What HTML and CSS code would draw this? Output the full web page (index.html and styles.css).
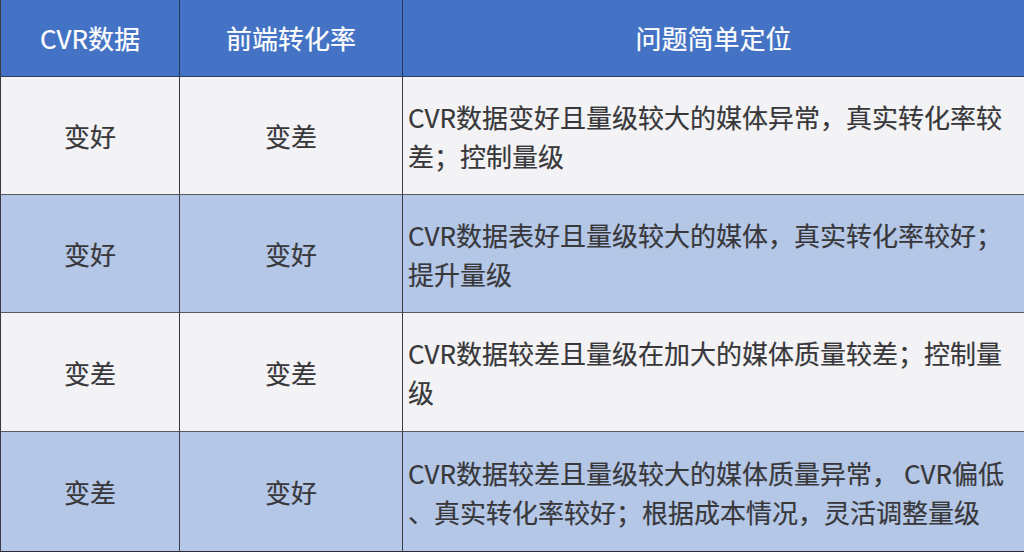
FILE: index.html
```html
<!DOCTYPE html>
<html lang="zh-CN">
<head>
<meta charset="utf-8">
<title>CVR数据</title>
<link rel="stylesheet" href="styles.css">
</head>
<body>
<div class="table">
  <div class="cell head c1">CVR数据</div>
  <div class="cell head c2">前端转化率</div>
  <div class="cell head c3">问题简单定位</div>

  <div class="cell light c1">变好</div>
  <div class="cell light c2">变差</div>
  <div class="cell light c3 desc"><p class="txt">CVR数据变好且量级较大的媒体异常，真实转化率较<br>差；控制量级</p></div>

  <div class="cell blue c1">变好</div>
  <div class="cell blue c2">变好</div>
  <div class="cell blue c3 desc"><p class="txt">CVR数据表好且量级较大的媒体，真实转化率较好；<br>提升量级</p></div>

  <div class="cell light c1">变差</div>
  <div class="cell light c2">变差</div>
  <div class="cell light c3 desc"><p class="txt">CVR数据较差且量级在加大的媒体质量较差；控制量<br>级</p></div>

  <div class="cell blue c1 last">变差</div>
  <div class="cell blue c2 last">变好</div>
  <div class="cell blue c3 desc last"><p class="txt">CVR数据较差且量级较大的媒体质量异常，<span class="sp">CVR偏低</span><br>、真实转化率较好；根据成本情况，灵活调整量级</p></div>
</div>
</body>
</html>
```

FILE: styles.css
```css
html, body {
  margin: 0;
  padding: 0;
  background: #f3f3f5;
}
body {
  width: 1024px;
  height: 552px;
  overflow: hidden;
  font-family: "Noto Sans CJK SC", "Noto Sans", sans-serif;
}
.table {
  display: grid;
  grid-template-columns: 180px 223px 621px;
  grid-template-rows: 77px 118px 118px 119px 120px;
  width: 1024px;
  height: 552px;
}
.cell {
  box-sizing: border-box;
  display: flex;
  align-items: center;
  justify-content: center;
  font-size: 26px;
  line-height: 39px;
  color: #38383b;
  -webkit-text-stroke: 0.2px currentColor;
  border-bottom: 1px solid #5a5a5e;
  border-right: 1px solid #3a3a40;
}
.c1 {
  border-left: 1px solid #3a3a40;
}
.c3 {
  border-right: none;
}
.head {
  background: #4473c5;
  color: #ffffff;
  border-bottom-color: #2c3f66;
  border-right-color: #2a3656;
  padding-bottom: 1px;
}
.light {
  background: #f3f3f5;
}
.blue {
  background: #b4c7e7;
}
.desc {
  justify-content: flex-start;
  padding-left: 5px;
}
.txt {
  margin: 0;
  white-space: nowrap;
}
.last {
  border-bottom: 1px solid #2a2a30;
}
.sp {
  margin-left: 6px;
}
```
